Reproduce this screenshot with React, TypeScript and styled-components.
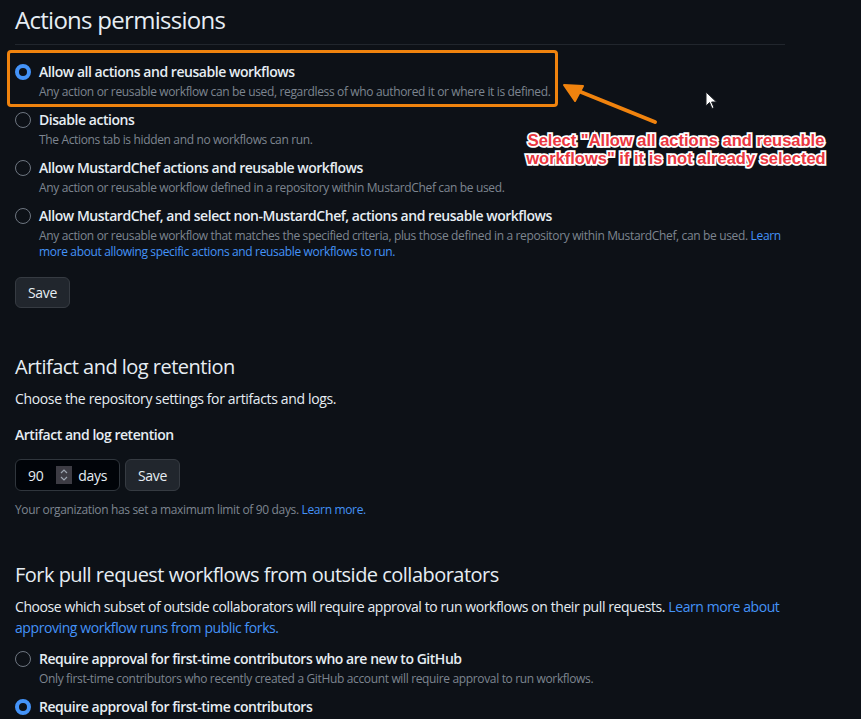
import React from "react";
import styled, { createGlobalStyle } from "styled-components";

const GlobalStyle = createGlobalStyle`
  html, body {
    margin: 0;
    background: #0d1117;
  }
  body {
    font-family: "Open Sans", "Noto Sans", sans-serif;
    color: #e6edf3;
    font-size: 14px;
    line-height: 1.5;
    letter-spacing: -0.025em;
  }
`;

type OptionProps = {
  title: string;
  checked?: boolean;
  children?: React.ReactNode;
};

const Option = ({ title, checked, children }: OptionProps) => {
  return (
    <OptionRow>
      <Radio $checked={checked} />
      <OptionBody>
        <OptionTitle>{title}</OptionTitle>
        {children && <Hint>{children}</Hint>}
      </OptionBody>
    </OptionRow>
  );
};

const App = () => {
  return (
    <Page>
      <GlobalStyle />
      <PageTitle>Actions permissions</PageTitle>

      <Options>
        <Option title="Allow all actions and reusable workflows" checked>
          Any action or reusable workflow can be used, regardless of who authored it or where it is defined.
        </Option>
        <Option title="Disable actions">The Actions tab is hidden and no workflows can run.</Option>
        <Option title="Allow MustardChef actions and reusable workflows">
          Any action or reusable workflow defined in a repository within MustardChef can be used.
        </Option>
        <Option title="Allow MustardChef, and select non-MustardChef, actions and reusable workflows">
          Any action or reusable workflow that matches the specified criteria, plus those defined in a repository
          within MustardChef, can be used.{" "}
          <Link>Learn more about allowing specific actions and reusable workflows to run.</Link>
        </Option>
      </Options>

      <Button $top={17}>Save</Button>

      <SectionTitle $top={44}>Artifact and log retention</SectionTitle>
      <Paragraph>Choose the repository settings for artifacts and logs.</Paragraph>
      <FieldLabel>Artifact and log retention</FieldLabel>
      <InputRow>
        <NumberBox>
          <NumberValue>90</NumberValue>
          <Spinner>
            <svg width="10" height="14" viewBox="0 0 10 14" fill="none">
              <path d="M2 5 L5 2 L8 5" stroke="#9da5b0" strokeWidth="1.2" />
              <path d="M2 9 L5 12 L8 9" stroke="#9da5b0" strokeWidth="1.2" />
            </svg>
          </Spinner>
          <Unit>days</Unit>
        </NumberBox>
        <Button $top={0} $tall>
          Save
        </Button>
      </InputRow>
      <Note>
        Your organization has set a maximum limit of 90 days. <Link>Learn more.</Link>
      </Note>

      <SectionTitle $top={41}>Fork pull request workflows from outside collaborators</SectionTitle>
      <Paragraph $tight>
        Choose which subset of outside collaborators will require approval to run workflows on their pull requests.{" "}
        <Link>Learn more about approving workflow runs from public forks.</Link>
      </Paragraph>
      <Options $top={10}>
        <Option title="Require approval for first-time contributors who are new to GitHub">
          Only first-time contributors who recently created a GitHub account will require approval to run workflows.
        </Option>
        <Option title="Require approval for first-time contributors" checked />
      </Options>

      <Highlight />
      <Arrow width="100" height="44" viewBox="0 0 100 44">
        <path d="M94 40 L10 6" stroke="#f0830e" strokeWidth="4" strokeLinecap="round" />
        <path d="M3 3 L22 4 L14 19 Z" fill="#f0830e" stroke="#f0830e" strokeWidth="2" strokeLinejoin="round" />
      </Arrow>
      <Callout>
        Select "Allow all actions and reusable
        <br />
        workflows" if it is not already selected
      </Callout>
      <Cursor width="13" height="19" viewBox="0 0 13 19">
        <path d="M1 1 L1 15 L4.5 11.5 L7 17.5 L9 16.6 L6.6 11 L11.5 11 Z" fill="#ffffff" stroke="#1b1f24" strokeWidth="1" />
      </Cursor>
    </Page>
  );
};

export default App;

const Page = styled.div`
  position: relative;
  width: 770px;
  padding: 0 15px 40px;
`;

const PageTitle = styled.h2`
  margin: 0;
  padding: 2px 0 6px;
  font-size: 24px;
  font-weight: 400;
  line-height: 36px;
  letter-spacing: -0.03em;
  border-bottom: 1px solid #21262d;
`;

const Options = styled.div<{ $top?: number }>`
  display: flex;
  flex-direction: column;
  gap: 9px;
  margin-top: ${(p) => p.$top ?? 16}px;
`;

const OptionRow = styled.div`
  display: grid;
  grid-template-columns: 16px 1fr;
  column-gap: 8px;
`;

const Radio = styled.span<{ $checked?: boolean }>`
  box-sizing: border-box;
  width: 16px;
  height: 16px;
  margin-top: 3px;
  border-radius: 50%;
  background: #0d1117;
  border: ${(p) => (p.$checked ? "4.5px solid #4493f8" : "1px solid #6e7681")};
`;

const OptionBody = styled.div`
  display: flex;
  flex-direction: column;
`;

const OptionTitle = styled.div`
  font-weight: 600;
  line-height: 21px;
  letter-spacing: -0.033em;
`;

const Hint = styled.div`
  margin-top: 2px;
  font-size: 12px;
  line-height: 16px;
  color: #7d8590;
`;

const Link = styled.a`
  color: #4493f8;
  cursor: pointer;
`;

const Button = styled.button<{ $top: number; $tall?: boolean }>`
  align-self: flex-start;
  display: block;
  margin-top: ${(p) => p.$top}px;
  height: ${(p) => (p.$tall ? 32 : 31)}px;
  padding: 0 12px;
  background: #21262d;
  border: 1px solid #363b42;
  border-radius: 6px;
  color: #e6edf3;
  font-family: inherit;
  font-size: 14px;
  font-weight: 500;
  letter-spacing: -0.025em;
`;

const SectionTitle = styled.h3<{ $top: number }>`
  margin: ${(p) => p.$top}px 0 0;
  font-size: 20px;
  font-weight: 400;
  line-height: 30px;
  letter-spacing: -0.026em;
`;

const Paragraph = styled.p<{ $tight?: boolean }>`
  margin: 6px 0 0;
  line-height: 21px;
  letter-spacing: ${(p) => (p.$tight ? "-0.03em" : "-0.025em")};
`;

const FieldLabel = styled.div`
  margin-top: 15px;
  font-weight: 600;
  line-height: 21px;
  letter-spacing: -0.033em;
`;

const InputRow = styled.div`
  display: flex;
  gap: 5px;
  margin-top: 14px;
`;

const NumberBox = styled.div`
  box-sizing: border-box;
  display: flex;
  align-items: center;
  width: 105px;
  height: 32px;
  padding: 0 12px;
  border: 1px solid #30363d;
  border-radius: 6px;
  background: #010409;
`;

const NumberValue = styled.span`
  width: 29px;
`;

const Spinner = styled.span`
  display: flex;
  align-items: center;
  justify-content: center;
  width: 17px;
  height: 18px;
  background: #3d3c44;
`;

const Unit = styled.span`
  margin-left: 6px;
`;

const Note = styled.div`
  margin-top: 10px;
  font-size: 12px;
  line-height: 18px;
  color: #7d8590;
`;

const Highlight = styled.div`
  position: absolute;
  left: 7px;
  top: 50px;
  width: 551px;
  height: 57px;
  box-sizing: border-box;
  border: 3px solid #f0830e;
  border-radius: 4px;
  pointer-events: none;
`;

const Arrow = styled.svg`
  position: absolute;
  left: 561px;
  top: 82px;
`;

const Callout = styled.div`
  position: absolute;
  left: 496px;
  top: 131px;
  width: 360px;
  text-align: center;
  font-family: "Liberation Sans", Arial, sans-serif;
  font-weight: 700;
  font-size: 16.5px;
  line-height: 18px;
  letter-spacing: 0;
  color: #ea3640;
  -webkit-text-stroke: 3.5px #ffffff;
  paint-order: stroke fill;
`;

const Cursor = styled.svg`
  position: absolute;
  left: 705px;
  top: 91px;
`;
